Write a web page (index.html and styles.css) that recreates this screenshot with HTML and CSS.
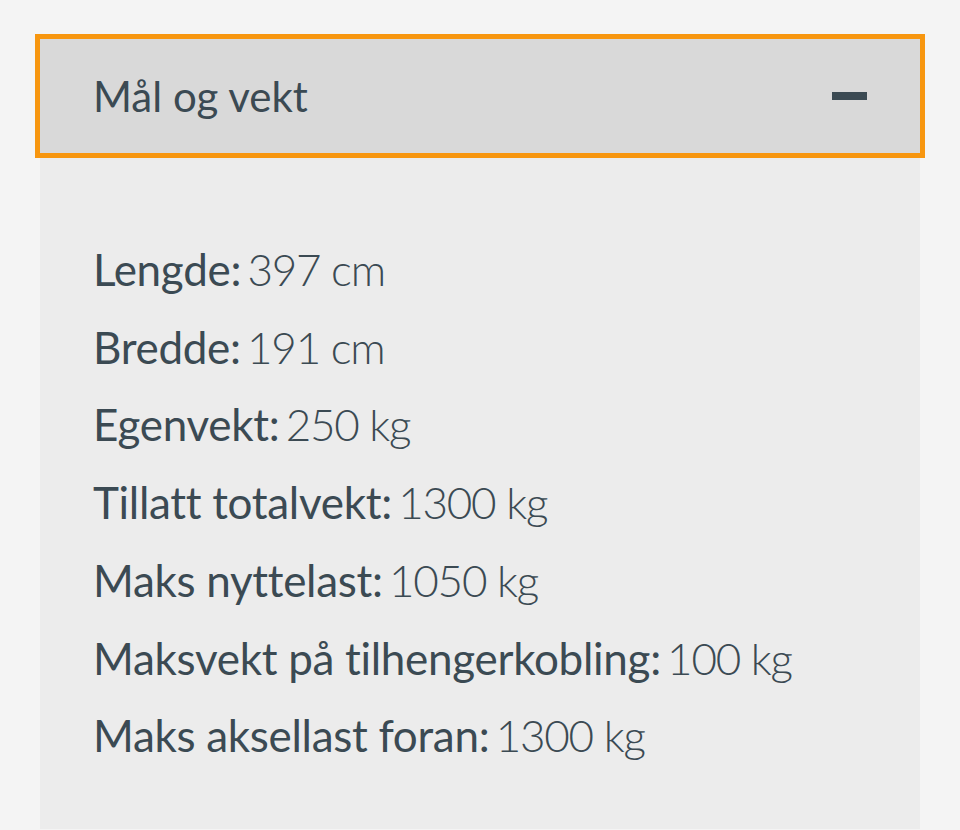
FILE: index.html
```html
<!DOCTYPE html>
<html lang="no">
<head>
<meta charset="utf-8">
<link rel="stylesheet" href="styles.css">
</head>
<body>
<div class="panel">
  <button class="panel-head" type="button">
    <span class="panel-title">Mål og vekt</span>
    <span class="minus"></span>
  </button>
  <div class="panel-body">
    <p class="row"><span class="label">Lengde:</span> <span class="val">397 cm</span></p>
    <p class="row"><span class="label">Bredde:</span> <span class="val">191 cm</span></p>
    <p class="row"><span class="label">Egenvekt:</span> <span class="val">250 kg</span></p>
    <p class="row"><span class="label">Tillatt totalvekt:</span> <span class="val">1300 kg</span></p>
    <p class="row"><span class="label">Maks nyttelast:</span> <span class="val">1050 kg</span></p>
    <p class="row"><span class="label">Maksvekt på tilhengerkobling:</span> <span class="val">100 kg</span></p>
    <p class="row"><span class="label">Maks aksellast foran:</span> <span class="val">1300 kg</span></p>
  </div>
</div>
</body>
</html>
```
FILE: styles.css
```css
html, body {
  margin: 0;
  padding: 0;
  background: #f4f4f4;
}
body {
  padding: 39px 40px 0 40px;
  font-family: Lato, "Open Sans", sans-serif;
  color: #3b4a53;
}
.panel {
  display: flex;
  flex-direction: column;
}
.panel-head {
  position: relative;
  z-index: 1;
  display: flex;
  align-items: center;
  justify-content: space-between;
  height: 114px;
  padding: 0 53px 0 54px;
  border: 0;
  background: #d9d9d9;
  outline: 5px solid #f7960f;
  font-family: inherit;
  color: inherit;
  text-align: left;
  cursor: pointer;
}
.panel-title {
  font-size: 42px;
  font-weight: 400;
  transform: translateX(-1px);
}
.minus {
  width: 35px;
  height: 8px;
  background: #3b4a53;
}
.panel-body {
  background: #ececec;
  padding: 78px 55px 54px 53px;
}
.row {
  margin: 0;
  font-size: 44px;
  line-height: 77.7px;
}
.label {
  font-weight: 400;
  letter-spacing: -0.3px;
}
.val {
  font-weight: 300;
  letter-spacing: -1.2px;
  margin-left: -5px;
}
```
